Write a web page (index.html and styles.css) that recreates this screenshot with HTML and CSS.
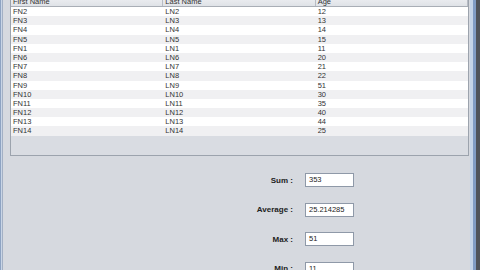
FILE: index.html
```html
<!DOCTYPE html>
<html>
<head>
<meta charset="utf-8">
<link rel="stylesheet" href="styles.css">
</head>
<body>
<div class="window">
  <div class="edge-left"></div>
  <div class="main">
    <div class="pane">
      <div class="header">
        <div class="hcell">First Name</div>
        <div class="hcell">Last Name</div>
        <div class="hcell last">Age</div>
      </div>
      <div class="rows">
        <div class="row"><span>FN2</span><span>LN2</span><span>12</span></div>
        <div class="row"><span>FN3</span><span>LN3</span><span>13</span></div>
        <div class="row"><span>FN4</span><span>LN4</span><span>14</span></div>
        <div class="row"><span>FN5</span><span>LN5</span><span>15</span></div>
        <div class="row"><span>FN1</span><span>LN1</span><span>11</span></div>
        <div class="row"><span>FN6</span><span>LN6</span><span>20</span></div>
        <div class="row"><span>FN7</span><span>LN7</span><span>21</span></div>
        <div class="row"><span>FN8</span><span>LN8</span><span>22</span></div>
        <div class="row"><span>FN9</span><span>LN9</span><span>51</span></div>
        <div class="row"><span>FN10</span><span>LN10</span><span>30</span></div>
        <div class="row"><span>FN11</span><span>LN11</span><span>35</span></div>
        <div class="row"><span>FN12</span><span>LN12</span><span>40</span></div>
        <div class="row"><span>FN13</span><span>LN13</span><span>44</span></div>
        <div class="row"><span>FN14</span><span>LN14</span><span>25</span></div>
      </div>
    </div>
    <div class="form">
      <div class="label">Sum :</div><div class="field">353</div>
      <div class="label">Average :</div><div class="field">25.214285</div>
      <div class="label">Max :</div><div class="field">51</div>
      <div class="label">Min :</div><div class="field">11</div>
    </div>
  </div>
  <div class="edge-right"></div>
</div>
</body>
</html>
```

FILE: styles.css
```css
html, body {
  margin: 0;
  padding: 0;
  width: 480px;
  height: 270px;
  overflow: hidden;
  background: #d6d9df;
  font-family: "Liberation Sans", Arial, sans-serif;
}
.window {
  display: flex;
  height: 270px;
}
.edge-left {
  width: 3px;
  flex: none;
  background: linear-gradient(to right, #8ea3c2 0, #8ea3c2 1px, #c9d5e6 1px, #c9d5e6 2px, #a3b0c4 2px);
}
.edge-right {
  width: 11px;
  flex: none;
  background: linear-gradient(to right, #d6d9df 0, #d6d9df 1px, #c3d3ea 1px, #c3d3ea 4px, #7f9bc6 4px, #7f9bc6 7px, #4d525c 7px);
}
.main {
  flex: 1;
  padding-left: 7px;
  display: flex;
  flex-direction: column;
  min-width: 0;
}
.pane {
  margin-top: -7px;
  height: 163px;
  box-sizing: border-box;
  border: 1px solid #9ca3ad;
  background: #d9dce2;
  display: flex;
  flex-direction: column;
  flex: none;
}
.header {
  display: grid;
  grid-template-columns: 1fr 1fr 1fr;
  height: 12px;
  border-bottom: 1px solid #a9aeb6;
  background: linear-gradient(#f4f5f7, #dfe2e7);
}
.hcell {
  font-size: 7.5px;
  line-height: 9px;
  color: #333;
  padding-left: 2px;
  display: flex;
  align-items: flex-end;
  border-right: 1px solid #b8bcc4;
}
.rows {
  display: flex;
  flex-direction: column;
}
.row {
  display: grid;
  grid-template-columns: 1fr 1fr 1fr;
  height: 9.2px;
  font-size: 7.5px;
  line-height: 9.2px;
  color: #333;
  background: #ffffff;
}
.row:nth-child(even) {
  background: #f0f0f2;
}
.row span {
  padding-left: 2px;
  white-space: nowrap;
}
.form {
  margin-top: 17px;
  display: grid;
  grid-template-columns: 283px 49px;
  column-gap: 12px;
  row-gap: 15.5px;
}
.label {
  font-size: 8px;
  font-weight: bold;
  color: #222;
  text-align: right;
  display: flex;
  align-items: center;
  justify-content: flex-end;
}
.field {
  height: 14px;
  box-sizing: border-box;
  border: 1px solid #8f99a8;
  background: #fff;
  font-size: 7.5px;
  line-height: 12px;
  color: #222;
  padding-left: 3px;
}
```
